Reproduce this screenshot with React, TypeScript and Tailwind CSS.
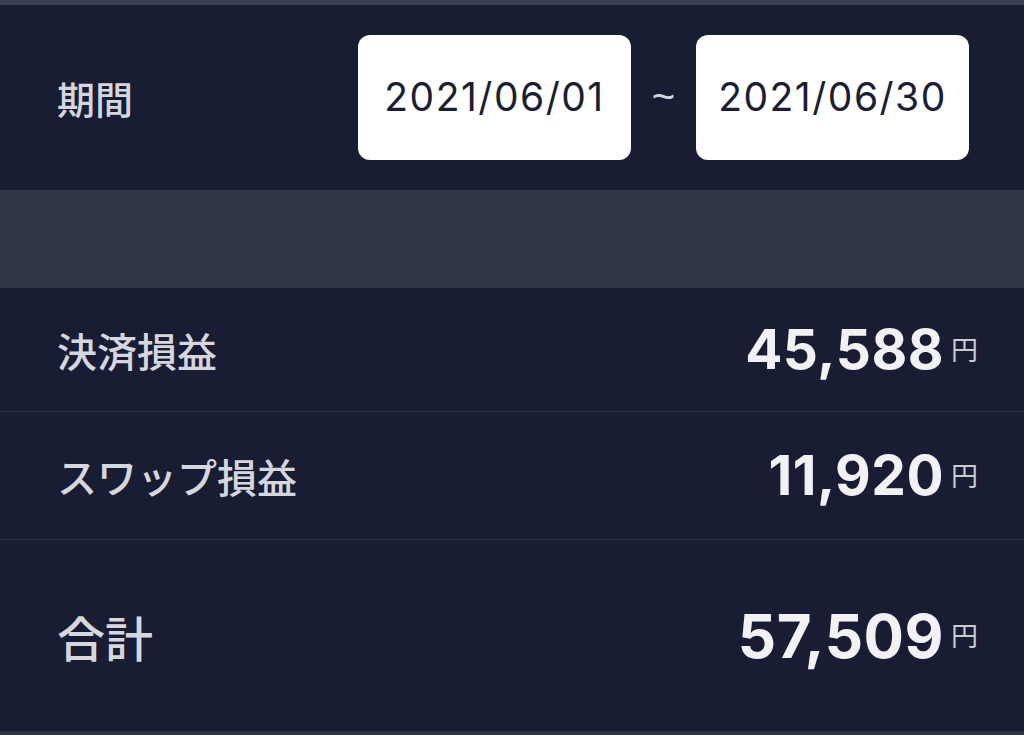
import React from 'react';

const LATIN = "font-['Inter','Noto_Sans_CJK_JP',sans-serif]";
const JP = "font-['Noto_Sans_CJK_JP','Noto_Sans',sans-serif]";

interface ProfitRow {
  label: string;
  amount: string;
  big?: boolean;
}

const rows: ProfitRow[] = [
  { label: '決済損益', amount: '45,588' },
  { label: 'スワップ損益', amount: '11,920' },
  { label: '合計', amount: '57,509', big: true },
];

function DateBox({ value }: { value: string }) {
  return (
    <div
      className={`flex h-[125px] w-[273px] items-center justify-center rounded-[12px] bg-white text-[39px] tracking-[1.5px] text-[#1b1e33] ${LATIN}`}
    >
      {value}
    </div>
  );
}

export default function App() {
  return (
    <div className="flex h-[735px] w-[1024px] flex-col overflow-hidden bg-[#181d33]">
      <div className="h-[5px] bg-[#3a3f54]" />

      {/* Period */}
      <div className="flex h-[185px] items-center justify-between pl-[57px] pr-[55px]">
        <span className={`text-[38px] font-medium text-[#d6d7de] ${JP}`}>期間</span>
        <div className="flex items-center">
          <DateBox value="2021/06/01" />
          <span
            className={`w-[65px] pb-[4px] text-center text-[40px] text-[#d6d7de] font-['Liberation_Sans',sans-serif]`}
          >
            ~
          </span>
          <DateBox value="2021/06/30" />
        </div>
      </div>

      <div className="h-[98px] bg-[#313548]" />

      {/* Results */}
      {rows.map((row, i) => (
        <div
          key={row.label}
          className={`flex items-center justify-between pl-[57px] pr-[46px] ${
            i === 0 ? 'h-[124px]' : i === 1 ? 'h-[128px]' : 'h-[191px]'
          } ${i < 2 ? 'border-b border-[#2f3448]' : ''}`}
        >
          <span
            className={`font-medium text-[#d6d7de] ${JP} ${row.big ? 'text-[48px]' : 'text-[40px]'}`}
          >
            {row.label}
          </span>
          <div className="flex items-center gap-[7px]">
            <span
              className={`font-bold tracking-[0.5px] text-[#f2f2f5] ${LATIN} ${
                row.big ? 'text-[60px]' : 'text-[55px]'
              }`}
            >
              {row.amount}
            </span>
            <span className={`text-[27px] text-[#c9cad2] ${JP}`}>円</span>
          </div>
        </div>
      ))}

      <div className="flex-1 bg-[#2f3347]" />
    </div>
  );
}
